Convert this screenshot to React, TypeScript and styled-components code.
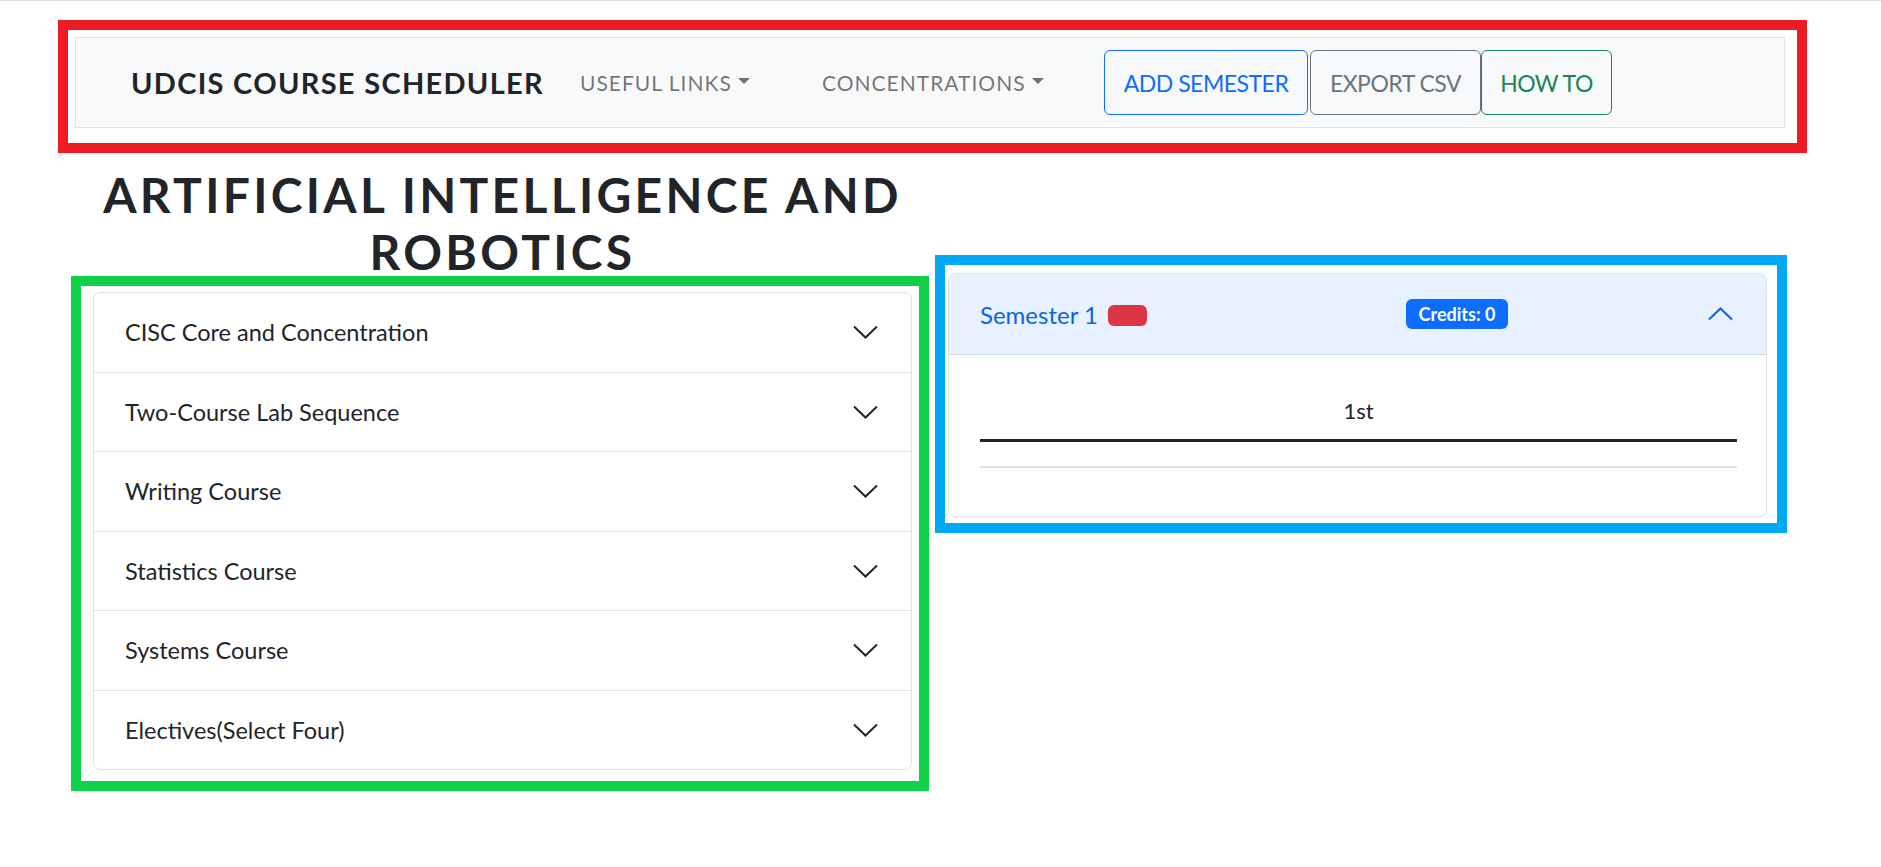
import React from "react";
import styled, { createGlobalStyle } from "styled-components";

const GlobalStyle = createGlobalStyle`
  html, body { margin: 0; padding: 0; background: #fff; }
  body { font-family: Lato, "Noto Sans", sans-serif; color: #212529; }
  *, *::before, *::after { box-sizing: border-box; }
`;

const Page = styled.div`
  position: relative;
  min-height: 866px;
  border-top: 1px solid #dcdcdc;
`;

const Navbar = styled.nav`
  display: flex;
  align-items: center;
  width: 1710px;
  height: 91px;
  margin: 36px 0 0 75px;
  padding-left: 55px;
  background: #f8f9fa;
  border: 1px solid #dee2e6;
`;

const Brand = styled.div`
  width: 449px;
  font-size: 29px;
  font-weight: 700;
  letter-spacing: 1.3px;
  color: #212529;
  white-space: nowrap;
`;

const NavLink = styled.div<{ $w: number }>`
  display: flex;
  align-items: center;
  width: ${(p) => p.$w}px;
  font-size: 21px;
  letter-spacing: 1px;
  color: rgba(0, 0, 0, 0.55);
  white-space: nowrap;
`;

const Caret = styled.span`
  display: inline-block;
  margin-left: 6px;
  margin-top: -3px;
  border-top: 6px solid rgba(0, 0, 0, 0.55);
  border-left: 6px solid transparent;
  border-right: 6px solid transparent;
`;

const ButtonGroup = styled.div`
  display: flex;
  align-items: center;
`;

const OutlineButton = styled.button<{ $c: string; $w: number; $ml: number }>`
  width: ${(p) => p.$w}px;
  height: 65px;
  margin-left: ${(p) => p.$ml}px;
  padding: 0;
  background: transparent;
  border: 1px solid ${(p) => p.$c};
  border-radius: 6px;
  color: ${(p) => p.$c};
  font-family: Lato, "Noto Sans", sans-serif;
  font-size: 23px;
  letter-spacing: -0.5px;
  text-align: center;
  white-space: nowrap;
`;

const Main = styled.div`
  display: grid;
  grid-template-columns: 819px 819px;
  column-gap: 36px;
  margin-left: 93px;
`;

const LeftCol = styled.div`
  display: flex;
  flex-direction: column;
`;

const Heading = styled.h2`
  margin: 38px 0 12px;
  text-align: center;
  font-size: 48px;
  line-height: 57px;
  font-weight: 700;
  letter-spacing: 3.3px;
  color: #212529;
`;

const Accordion = styled.div`
  border: 1px solid #dee2e6;
  border-radius: 7px;
  overflow: hidden;
  background: #fff;
`;

const AccordionItem = styled.div`
  display: flex;
  align-items: center;
  justify-content: space-between;
  height: 78.5px;
  padding: 0 33px 0 31px;
  font-size: 23.5px;
  color: #212529;
  & + & {
    height: 79.5px;
    border-top: 1px solid #dee2e6;
  }
`;

const RightCol = styled.div`
  padding-top: 145px;
`;

const SemesterCard = styled.div`
  border: 1px solid #dee2e6;
  border-radius: 7px;
  overflow: hidden;
  background: #fff;
`;

const SemesterHeader = styled.div`
  display: grid;
  grid-template-columns: 426px auto 1fr auto;
  align-items: center;
  height: 81px;
  padding: 0 33px 0 31px;
  background: #e7f1ff;
  border-bottom: 1px solid #ced9e6;
`;

const SemesterTitle = styled.div`
  display: flex;
  align-items: center;
  gap: 10px;
  font-size: 24px;
  color: #0c63e4;
`;

const Badge = styled.span<{ $bg: string }>`
  display: inline-flex;
  align-items: center;
  justify-content: center;
  background: ${(p) => p.$bg};
  color: #fff;
  border-radius: 6px;
  font-weight: 700;
`;

const EmptyBadge = styled(Badge)`
  width: 39px;
  height: 21px;
  margin-top: 3px;
`;

const CreditsBadge = styled(Badge)`
  width: 102px;
  height: 30px;
  font-size: 18px;
`;

const ChevronCell = styled.div`
  grid-column: 4;
  display: flex;
  align-items: center;
`;

const SemesterBody = styled.div`
  padding: 24px 29px 48px 31px;
`;

const CourseTable = styled.table`
  width: 100%;
  border-collapse: collapse;
`;

const HeadCell = styled.th`
  padding: 15px 8px 12px;
  font-size: 22px;
  line-height: 33px;
  font-weight: 400;
  text-align: center;
  color: #212529;
  border-bottom: 3px solid #212529;
`;

const BodyCell = styled.td`
  height: 26px;
  padding: 0;
  border-bottom: 2px solid #dee2e6;
`;

const Annotation = styled.div<{ $c: string; $x: number; $y: number; $w: number; $h: number }>`
  position: absolute;
  left: ${(p) => p.$x}px;
  top: ${(p) => p.$y}px;
  width: ${(p) => p.$w}px;
  height: ${(p) => p.$h}px;
  border: 10px solid ${(p) => p.$c};
  pointer-events: none;
`;

const ChevronDown = () => (
  <svg width="25" height="14" viewBox="0 0 25 14">
    <polyline points="1,1.5 12.5,12.5 24,1.5" fill="none" stroke="#212529" strokeWidth="2" />
  </svg>
);

const ChevronUp = () => (
  <svg width="25" height="14" viewBox="0 0 25 14">
    <polyline points="1,12.5 12.5,1.5 24,12.5" fill="none" stroke="#0c63e4" strokeWidth="2" />
  </svg>
);

const groups = [
  "CISC Core and Concentration",
  "Two-Course Lab Sequence",
  "Writing Course",
  "Statistics Course",
  "Systems Course",
  "Electives(Select Four)",
];

export default function App() {
  return (
    <Page>
      <GlobalStyle />
      <Navbar>
        <Brand>UDCIS COURSE SCHEDULER</Brand>
        <NavLink $w={242}>
          USEFUL LINKS<Caret />
        </NavLink>
        <NavLink $w={282}>
          CONCENTRATIONS<Caret />
        </NavLink>
        <ButtonGroup>
          <OutlineButton $c="#0d6efd" $w={204} $ml={0}>ADD SEMESTER</OutlineButton>
          <OutlineButton $c="#6c757d" $w={171} $ml={2}>EXPORT CSV</OutlineButton>
          <OutlineButton $c="#198754" $w={131} $ml={0}>HOW TO</OutlineButton>
        </ButtonGroup>
      </Navbar>
      <Main>
        <LeftCol>
          <Heading>
            ARTIFICIAL INTELLIGENCE AND
            <br />
            ROBOTICS
          </Heading>
          <Accordion>
            {groups.map((g) => (
              <AccordionItem key={g}>
                <span>{g}</span>
                <ChevronDown />
              </AccordionItem>
            ))}
          </Accordion>
        </LeftCol>
        <RightCol>
          <SemesterCard>
            <SemesterHeader>
              <SemesterTitle>
                Semester 1<EmptyBadge $bg="#dc3545" />
              </SemesterTitle>
              <CreditsBadge $bg="#0d6efd">Credits: 0</CreditsBadge>
              <ChevronCell>
                <ChevronUp />
              </ChevronCell>
            </SemesterHeader>
            <SemesterBody>
              <CourseTable>
                <thead>
                  <tr>
                    <HeadCell>1st</HeadCell>
                  </tr>
                </thead>
                <tbody>
                  <tr>
                    <BodyCell />
                  </tr>
                </tbody>
              </CourseTable>
            </SemesterBody>
          </SemesterCard>
        </RightCol>
      </Main>
      <Annotation $c="#ed1c24" $x={58} $y={19} $w={1749} $h={133} />
      <Annotation $c="#12d147" $x={71} $y={275} $w={858} $h={515} />
      <Annotation $c="#00a8f3" $x={935} $y={254} $w={852} $h={278} />
    </Page>
  );
}
